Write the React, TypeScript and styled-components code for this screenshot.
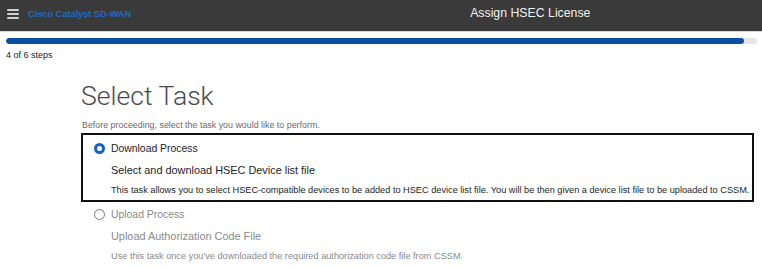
import React from 'react'
import styled, { createGlobalStyle } from 'styled-components'

const GlobalStyle = createGlobalStyle`
    body {
        margin: 0;
        background: #ffffff;
        font-family: "Liberation Sans", Arial, sans-serif;
    }
`

const Page = styled.div`
    width: 762px;
    height: 268px;
    overflow: hidden;
    display: flex;
    flex-direction: column;
    & > * {
        flex: none;
    }
`

const Header = styled.header`
    height: 31px;
    background: #3a3a3a;
    border-bottom: 1px solid #d8d8d8;
    display: flex;
    align-items: center;
    padding-left: 7px;
`

const Burger = styled.div`
    width: 12px;
    display: flex;
    flex-direction: column;
    gap: 2.5px;
    margin-right: 9px;
    margin-top: -3px;
    span {
        height: 1.5px;
        background: #cfcfcf;
        border-radius: 1px;
    }
`

const Brand = styled.div`
    color: #1f6cc0;
    font-weight: bold;
    font-size: 9.2px;
    margin-top: -3px;
`

const HeaderTitle = styled.div`
    margin-left: 339px;
    color: #f2f2f2;
    font-size: 12.3px;
    margin-top: -6px;
`

const Progress = styled.div`
    padding: 6px 5px 0 6px;
`

const Track = styled.div`
    height: 6px;
    background: #e6e6e6;
    border-radius: 3px;
    overflow: hidden;
`

const Fill = styled.div`
    height: 100%;
    background: #0c4ea2;
    border-radius: 3px;
`

const Steps = styled.div`
    font-size: 9px;
    color: #222;
    padding: 6px 0 0 6px;
`

const Content = styled.main`
    padding: 20px 8px 0 81px;
`

const Title = styled.h1`
    margin: 0;
    font-family: Roboto, "Liberation Sans", sans-serif;
    font-weight: 300;
    font-size: 26.6px;
    line-height: 32px;
    color: #4a4a4a;
`

const Intro = styled.p`
    margin: 8px 0 0 1px;
    font-size: 8.9px;
    color: #6a6a6a;
`

const Option = styled.div<{ $selected?: boolean }>`
    margin-top: ${p => (p.$selected ? '3px' : '0')};
    border: 2px solid ${p => (p.$selected ? '#111' : 'transparent')};
    padding: ${p => (p.$selected ? '8px 3px 5px 11px' : '5px 3px 5px 11px')};
    color: ${p => (p.$selected ? '#1e1e1e' : '#8a8a8a')};
`

const OptionHead = styled.label`
    display: flex;
    align-items: center;
    gap: 6px;
    font-size: 10.4px;
`

const Radio = styled.span<{ $checked?: boolean }>`
    width: 11px;
    height: 11px;
    box-sizing: border-box;
    border-radius: 50%;
    border: ${p => (p.$checked ? '3px solid #1462c4' : '1px solid #7a7a7a')};
    background: #fff;
    flex: none;
`

const OptionTitle = styled.div`
    margin: 10px 0 0 17px;
    font-size: 10.9px;
`

const OptionText = styled.div`
    margin: 9px 0 0 17px;
    font-size: 9.2px;
    white-space: nowrap;
`

export default function App() {
    const done = 4
    const total = 6
    const pct = 98.3 * (done / total) / (4 / 6)
    return (
        <Page>
            <GlobalStyle />
            <Header>
                <Burger>
                    <span />
                    <span />
                    <span />
                </Burger>
                <Brand>Cisco Catalyst SD-WAN</Brand>
                <HeaderTitle>Assign HSEC License</HeaderTitle>
            </Header>
            <Progress>
                <Track>
                    <Fill style={{ width: `${pct}%` }} />
                </Track>
            </Progress>
            <Steps>{done} of {total} steps</Steps>
            <Content>
                <Title>Select Task</Title>
                <Intro>Before proceeding, select the task you would like to perform.</Intro>
                <Option $selected>
                    <OptionHead>
                        <Radio $checked />
                        Download Process
                    </OptionHead>
                    <OptionTitle>Select and download HSEC Device list file</OptionTitle>
                    <OptionText>
                        This task allows you to select HSEC-compatible devices to be added to HSEC device list file. You will be then given a device list file to be uploaded to CSSM.
                    </OptionText>
                </Option>
                <Option>
                    <OptionHead>
                        <Radio />
                        Upload Process
                    </OptionHead>
                    <OptionTitle>Upload Authorization Code File</OptionTitle>
                    <OptionText>
                        Use this task once you've downloaded the required authorization code file from CSSM.
                    </OptionText>
                </Option>
            </Content>
        </Page>
    )
}
